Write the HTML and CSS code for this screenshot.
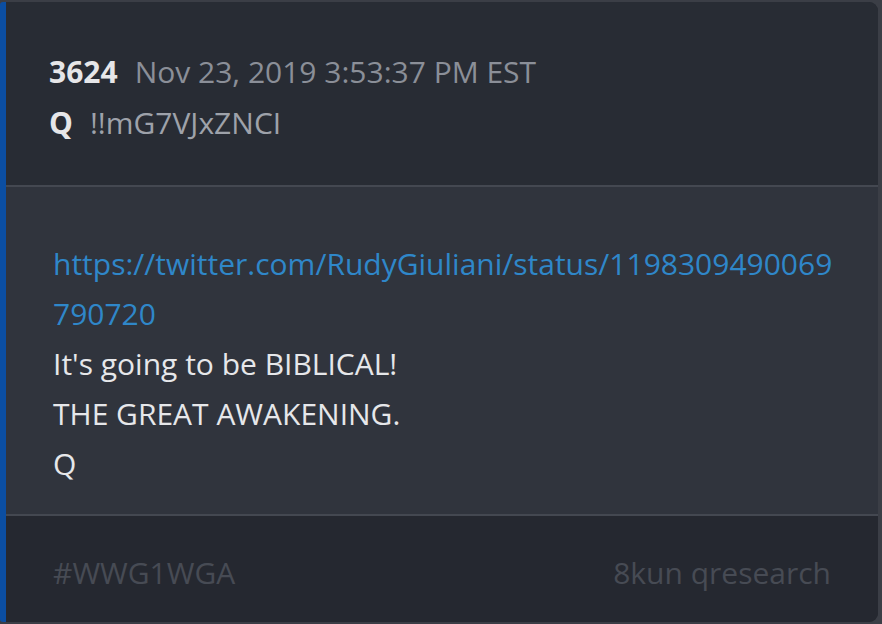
FILE: index.html
```html
<!DOCTYPE html>
<html>
<head>
<meta charset="utf-8">
<link rel="stylesheet" href="styles.css">
</head>
<body>
<div class="card">
  <div class="head">
    <div class="line"><span class="num">3624</span><span class="date">Nov 23, 2019 3:53:37 PM EST</span></div>
    <div class="line"><span class="num">Q</span><span class="trip">!!mG7VJxZNCI</span></div>
  </div>
  <div class="body">
    <a class="link" href="#">https://twitter.com/RudyGiuliani/status/1198309490069<br>790720</a>
    <div class="line">It's going to be BIBLICAL!</div>
    <div class="line">THE GREAT AWAKENING.</div>
    <div class="line">Q</div>
  </div>
  <div class="foot">
    <span>#WWG1WGA</span>
    <span>8kun qresearch</span>
  </div>
</div>
</body>
</html>
```
FILE: styles.css
```css
html, body {
  margin: 0;
  padding: 0;
  background: #3b3e46;
  font-family: "Open Sans", "Noto Sans", sans-serif;
}
.card {
  margin: 2px 4px 2px 0;
  height: 620px;
  box-sizing: border-box;
  border-left: 6px solid #0b4ea2;
  border-radius: 3px 9px 9px 3px;
  background: #272b33;
  display: flex;
  flex-direction: column;
  overflow: hidden;
}
.head {
  height: 185px;
  box-sizing: border-box;
  padding: 44px 0 0 43px;
  background: #282c34;
  border-bottom: 2px solid #444851;
  font-size: 30px;
  line-height: 51px;
}
.num {
  font-weight: 700;
  color: #e6e6e8;
  margin-right: 17px;
}
.date { color: #8b8f98; }
.trip { color: #9ea2aa; }
.body {
  flex: 1;
  background: #30343d;
  padding: 52px 20px 0 47px;
  font-size: 30px;
  line-height: 50px;
  color: #e6e7ea;
  border-bottom: 2px solid #444851;
}
.link {
  display: block;
  color: #2f87c9;
  text-decoration: none;
  white-space: nowrap;
}
.foot {
  height: 106px;
  box-sizing: border-box;
  background: #252830;
  display: flex;
  justify-content: space-between;
  padding: 32px 47px 0 47px;
  font-size: 30px;
  line-height: 50px;
  color: #474b54;
}
```
